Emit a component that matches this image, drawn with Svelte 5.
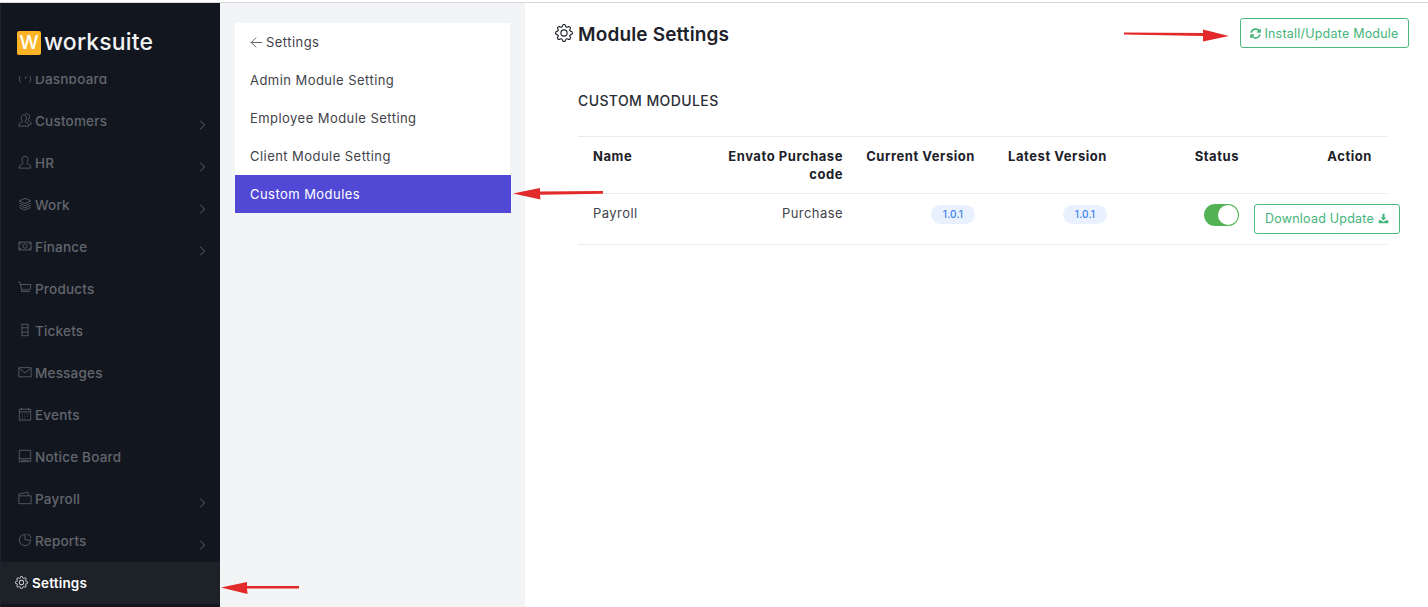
<script>
  const gear = 'M8 4.754a3.246 3.246 0 1 0 0 6.492 3.246 3.246 0 0 0 0-6.492zM5.754 8a2.246 2.246 0 1 1 4.492 0 2.246 2.246 0 0 1-4.492 0z M9.796 1.343c-.527-1.79-3.065-1.79-3.592 0l-.094.319a.873.873 0 0 1-1.255.52l-.292-.16c-1.64-.892-3.433.902-2.54 2.541l.159.292a.873.873 0 0 1-.52 1.255l-.319.094c-1.79.527-1.79 3.065 0 3.592l.319.094a.873.873 0 0 1 .52 1.255l-.16.292c-.892 1.64.901 3.434 2.541 2.54l.292-.159a.873.873 0 0 1 1.255.52l.094.319c.527 1.79 3.065 1.79 3.592 0l.094-.319a.873.873 0 0 1 1.255-.52l.292.16c1.64.893 3.434-.902 2.54-2.541l-.159-.292a.873.873 0 0 1 .52-1.255l.319-.094c1.79-.527 1.79-3.065 0-3.592l-.319-.094a.873.873 0 0 1-.52-1.255l.16-.292c.893-1.64-.902-3.433-2.541-2.54l-.292.159a.873.873 0 0 1-1.255-.52l-.094-.319zm-2.633.283c.246-.835 1.428-.835 1.674 0l.094.319a1.873 1.873 0 0 0 2.693 1.115l.291-.16c.764-.415 1.6.42 1.184 1.185l-.159.292a1.873 1.873 0 0 0 1.116 2.692l.318.094c.835.246.835 1.428 0 1.674l-.319.094a1.873 1.873 0 0 0-1.115 2.693l.16.291c.415.764-.42 1.6-1.185 1.184l-.291-.159a1.873 1.873 0 0 0-2.693 1.116l-.094.318c-.246.835-1.428.835-1.674 0l-.094-.319a1.873 1.873 0 0 0-2.692-1.115l-.292.16c-.764.415-1.6-.42-1.184-1.185l.159-.291A1.873 1.873 0 0 0 1.945 8.93l-.319-.094c-.835-.246-.835-1.428 0-1.674l.319-.094A1.873 1.873 0 0 0 3.06 4.377l-.16-.292c-.415-.764.42-1.6 1.185-1.184l.292.159a1.873 1.873 0 0 0 2.692-1.115l.094-.319z';

  // outline icons, drawn on a 16 box
  const icons = {
    dash: 'M3 13.5a6.5 6.5 0 1 1 10 0M8 9l2-3',
    customers: 'M1 15v-1.5c0-1.5 1.5-2.3 3-2.8.8-.3 1-.8.8-1.5C4 8 3.6 7 3.6 5.6 3.6 3.4 5 2.2 6.6 2.2S9.6 3.4 9.6 5.6c0 1.4-.4 2.4-1.2 3.6-.2.7 0 1.2.8 1.5 1.5.5 3 1.3 3 2.8V15ZM8 1.5c.5-.5 1.3-.8 2-.8 1.7 0 3 1.2 3 3.4 0 1.4-.4 2.4-1.2 3.6-.2.7 0 1.2.8 1.5 1 .4 2.4 1 2.4 2.6V13h-2',
    hr: 'M1.5 15v-1.5c0-1.6 1.7-2.5 3.3-3 .9-.3 1.1-.9.9-1.6C4.9 7.7 4.5 6.6 4.5 5.2 4.5 2.8 6 1.5 8 1.5s3.5 1.3 3.5 3.7c0 1.4-.4 2.5-1.2 3.7-.2.7 0 1.3.9 1.6 1.6.5 3.3 1.4 3.3 3V15Z',
    work: 'M8 1.5 14.5 4.5 8 7.5 1.5 4.5ZM1.5 7 8 10l6.5-3M1.5 9.5 8 12.5l6.5-3M1.5 12 8 15l6.5-3',
    finance: 'M1 3.5h14v9H1Z M1 6a2.5 2.5 0 0 0 2.5-2.5M12.5 3.5A2.5 2.5 0 0 0 15 6M1 10a2.5 2.5 0 0 1 2.5 2.5M12.5 12.5A2.5 2.5 0 0 1 15 10M8 5.5a2.5 2.5 0 1 0 0 5 2.5 2.5 0 0 0 0-5Z',
    products: 'M.5 1H2l.8 3M2.8 4H15l-1.5 6H4.3Zm1.5 6-.5 2h9.7M5.5 14.5h.01M12 14.5h.01',
    tickets: 'M4.5 1v14l1.2-1 1.1 1 1.2-1 1.2 1 1.1-1 1.2 1V1l-1.2 1-1.1-1-1.2 1-1.2-1-1.1 1ZM4.5 5.5h7M4.5 10.5h7',
    messages: 'M1 3h14v10.5H1ZM1 3.5l7 5.5 7-5.5',
    events: 'M1.5 2.5h13V15h-13ZM4 1v2.500M12 1v2.500M1.500 5.500h13M4.500 8h1M7.500 8h1M10.500 8h1M4.500 10.500h1M7.500 10.500h1M10.500 10.500h1M4.500 13h1M7.500 13h1',
    notice: 'M1.5 1.5h13v13h-13ZM1.5 11h13M4 13h8',
    payroll: 'M1 5.5h14v9H1ZM1 5.5v-2l10-2 1.500 4M3 9.500h.01',
    reports: 'M8 1.5A6.500 6.500 0 1 0 14.500 8H8ZM10 1a6 6 0 0 1 5 5'
  };

  const menu = [
    { name: 'Dashboard', icon: 'dash' },
    { name: 'Customers', icon: 'customers', more: true },
    { name: 'HR', icon: 'hr', more: true },
    { name: 'Work', icon: 'work', more: true },
    { name: 'Finance', icon: 'finance', more: true },
    { name: 'Products', icon: 'products' },
    { name: 'Tickets', icon: 'tickets' },
    { name: 'Messages', icon: 'messages' },
    { name: 'Events', icon: 'events' },
    { name: 'Notice Board', icon: 'notice' },
    { name: 'Payroll', icon: 'payroll', more: true },
    { name: 'Reports', icon: 'reports', more: true }
  ];

  const settingsLinks = ['Admin Module Setting', 'Employee Module Setting', 'Client Module Setting'];
  const columns = ['Name', 'Envato Purchase code', 'Current Version', 'Latest Version', 'Status', 'Action'];
</script>

<div class="page">
  <div class="topline"></div>
  <div class="layout">
    <aside class="sidebar">
      <div class="brand">
        <span class="brand-mark">W</span>
        <span class="brand-name">worksuite</span>
      </div>
      <nav class="nav">
        <ul>
          {#each menu as item}
            <li>
              <svg class="nav-icon" viewBox="0 0 16 16" fill="none" stroke="currentColor" stroke-width="0.9"><path d={icons[item.icon]} /></svg>
              <span>{item.name}</span>
              {#if item.more}
                <svg class="chevron" viewBox="0 0 8 12" fill="none" stroke="currentColor" stroke-width="1"><path d="M2 1.5 6.5 6 2 10.5" /></svg>
              {/if}
            </li>
          {/each}
        </ul>
      </nav>
      <div class="nav-settings">
        <svg class="nav-gear" viewBox="0 0 16 16" fill="currentColor"><path d={gear} /></svg>
        <span>Settings</span>
      </div>
    </aside>

    <section class="submenu">
      <div class="submenu-card">
        <div class="submenu-row">
          <svg class="back" viewBox="0 0 16 16" fill="none" stroke="currentColor" stroke-width="1"><path d="M15 8H1.5M7.5 2l-6 6 6 6" /></svg>
          Settings
        </div>
        {#each settingsLinks as link}
          <div class="submenu-row">{link}</div>
        {/each}
        <div class="submenu-row active">Custom Modules</div>
      </div>
    </section>

    <main class="content">
      <header class="content-head">
        <h1>
          <svg class="title-gear" viewBox="0 0 16 16" fill="currentColor"><path d={gear} /></svg>
          Module Settings
        </h1>
        <button class="btn-outline install">
          <svg class="refresh" viewBox="0 0 512 512" fill="currentColor"><path d="M370.7 133.3C339.5 104 298.9 88 255.8 88c-77.5.1-144.3 53.2-162.8 126.9-1.3 5.4-6.1 9.1-11.6 9.1H24.1c-7.5 0-13.2-6.8-11.8-14.2C33.9 94.9 134.8 8 256 8c66.4 0 126.8 26.1 171.3 68.7L463 41c15.1-15.1 41-4.4 41 17v134c0 13.3-10.7 24-24 24H346c-21.4 0-32.1-25.9-17-41l41.7-41.7zM32 296h134c21.4 0 32.1 25.9 17 41l-41.700 41.700c31.200 29.300 71.800 45.300 114.900 45.300 77.400-.1 144.300-53.100 162.800-126.800 1.300-5.400 6.100-9.100 11.600-9.100h57.300c7.500 0 13.200 6.800 11.800 14.200C478.100 417.100 377.200 504 256 504c-66.400 0-126.800-26.100-171.300-68.700L49 471c-15.100 15.100-41 4.400-41-17V320c0-13.300 10.700-24 24-24z" /></svg>
          Install/Update Module
        </button>
      </header>

      <h2>CUSTOM MODULES</h2>

      <table>
        <colgroup>
          <col class="c1" /><col class="c2" /><col class="c3" /><col class="c3" /><col class="c3" /><col class="c4" />
        </colgroup>
        <thead>
          <tr>
            {#each columns as col}
              <th>{col}</th>
            {/each}
          </tr>
        </thead>
        <tbody>
          <tr>
            <td>Payroll</td>
            <td class="right">Purchase</td>
            <td class="right"><span class="badge">1.0.1</span></td>
            <td class="right"><span class="badge">1.0.1</span></td>
            <td class="right"><span class="toggle"><span class="knob"></span></span></td>
            <td class="action">
              <button class="btn-outline download">
                Download Update
                <svg class="dl-icon" viewBox="0 0 16 16" fill="currentColor"><path d="M6.5 1h3v5.500h2.800L8 11 3.700 6.500h2.800Z M1 10.500h3.500L8 13l3.500-2.500H15V15H1Z" /></svg>
              </button>
            </td>
          </tr>
        </tbody>
      </table>
    </main>
  </div>

  <!-- annotation arrows drawn on top of the screenshot -->
  <svg class="arrows" viewBox="0 0 1428 607">
    <path d="M247 586h52v2.500h-52l.5 5.500L221 587.500 247 582Z" />
    <path d="M540 191.500l63-.5v2.800l-63 1 .5 4.700L513 193.500 540 188Z" />
    <path d="M1124 32.500l79 .5v-3.500L1229 36l-26 5.500V36l-79-1.500Z" />
  </svg>
</div>

<style>
  :global(body) {
    margin: 0;
    background: #fff;
  }

  .page {
    position: relative;
    height: 607px;
    overflow: hidden;
    font-family: Inter, "Liberation Sans", sans-serif;
    font-size: 13px;
    letter-spacing: 0.45px;
    color: #3f434a;
  }

  .topline {
    height: 2px;
    border-bottom: 1px solid #d6d8db;
  }

  .layout {
    display: flex;
    height: 604px;
  }

  .sidebar {
    width: 219px;
    flex: none;
    display: flex;
    flex-direction: column;
    background: #12161f;
    border-left: 1px solid #1e242d;
    color: #63666d;
  }

  .brand {
    height: 73px;
    flex: none;
    box-sizing: border-box;
    padding: 28px 0 0 16px;
    display: flex;
    align-items: flex-start;
    gap: 3px;
  }

  .brand-mark {
    width: 24px;
    height: 24px;
    border-radius: 2px;
    background: #fcb426;
    color: #fff;
    font-size: 19px;
    line-height: 24px;
    font-weight: 500;
    letter-spacing: 0;
    text-align: center;
  }

  .brand-name {
    color: #f2f3f4;
    font-size: 23px;
    line-height: 22px;
    font-weight: 500;
    letter-spacing: 0.15px;
  }

  .nav {
    flex: 1;
    overflow: hidden;
    min-height: 0;
  }

  .nav ul {
    list-style: none;
    margin: -18px 0 0;
    padding: 0;
  }

  .nav li {
    height: 42px;
    display: flex;
    align-items: center;
    padding-left: 17px;
    font-weight: 500;
    font-size: 13.5px;
    letter-spacing: 0.2px;
  }

  .nav-icon {
    width: 14px;
    height: 14px;
    margin: -3px 3px 0 0;
    flex: none;
  }

  .chevron {
    width: 8px;
    height: 12px;
    margin: 8px 14px 0 auto;
    flex: none;
  }

  .nav-settings {
    height: 42px;
    flex: none;
    margin-bottom: 3px;
    display: flex;
    align-items: center;
    padding-left: 14px;
    background: #1d2229;
    color: #fff;
    font-size: 13.5px;
    font-weight: 600;
    letter-spacing: 0.2px;
  }

  .nav-gear {
    width: 13px;
    height: 13px;
    margin: -2px 4px 0 0;
    color: #d8d9db;
  }

  .submenu {
    width: 305px;
    flex: none;
    box-sizing: border-box;
    padding: 20px 14px 0 15px;
    background: #f3f4f6;
  }

  .submenu-card {
    background: #fff;
    width: 275px;
  }

  .submenu-row {
    height: 38px;
    display: flex;
    align-items: center;
    padding-left: 15px;
  }

  .submenu-row.active {
    width: 261px;
    background: #5149d6;
    color: #fff;
  }

  .back {
    width: 13px;
    height: 13px;
    margin-right: 3px;
    flex: none;
  }

  .content {
    flex: 1;
    min-width: 0;
  }

  .content-head {
    display: flex;
    justify-content: space-between;
    align-items: flex-start;
    padding: 15px 19px 0 30px;
  }

  h1 {
    display: flex;
    align-items: center;
    gap: 5px;
    margin: 0;
    height: 32px;
    color: #1d2129;
    font-size: 19px;
    font-weight: 600;
    letter-spacing: 0.15px;
  }

  .title-gear {
    width: 18px;
    height: 18px;
    margin-top: -2px;
  }

  .btn-outline {
    display: inline-flex;
    align-items: center;
    box-sizing: border-box;
    background: #fff;
    border: 1px solid #4cb87e;
    border-radius: 3px;
    color: #45b47a;
    font-family: inherit;
    font-size: 12.5px;
    letter-spacing: 0.22px;
    white-space: nowrap;
    padding: 0;
  }

  .install {
    width: 169px;
    height: 30px;
    justify-content: center;
    gap: 3px;
  }

  .refresh {
    width: 11px;
    height: 11px;
  }

  h2 {
    margin: 42px 0 0 53px;
    height: 18px;
    color: #2a2e35;
    font-size: 14px;
    line-height: 18px;
    font-weight: 500;
    letter-spacing: 0.4px;
  }

  table {
    table-layout: fixed;
    width: 809px;
    margin: 26px 0 0 53px;
    border-collapse: collapse;
  }

  .c1 { width: 132px; }
  .c2 { width: 148px; }
  .c3 { width: 132px; }
  .c4 { width: 133px; }

  th {
    box-sizing: border-box;
    height: 57px;
    padding: 10px 15px 0 0;
    vertical-align: top;
    text-align: right;
    line-height: 18px;
    color: #1d2129;
    font-size: 13px;
    font-weight: 700;
    letter-spacing: 0.55px;
    border-top: 1px solid #e8eaec;
    border-bottom: 1px solid #e8eaec;
  }

  th:first-child {
    padding-left: 15px;
    text-align: left;
  }

  th:nth-child(2) {
    padding-left: 15px;
  }

  td {
    height: 51px;
    box-sizing: border-box;
    padding: 10px 15px 0;
    vertical-align: top;
    line-height: 18px;
    border-bottom: 1px solid #e8eaec;
  }

  .right {
    text-align: right;
  }

  .badge {
    display: inline-block;
    width: 44px;
    height: 19px;
    border-radius: 10px;
    background: #e8f1fd;
    color: #3f83ee;
    font-size: 10px;
    font-weight: 500;
    line-height: 19px;
    text-align: center;
    letter-spacing: 0.2px;
    vertical-align: top;
    margin-top: 1px;
  }

  .toggle {
    display: inline-block;
    box-sizing: border-box;
    width: 35px;
    height: 22px;
    border-radius: 11px;
    background: #53b354;
    position: relative;
    vertical-align: top;
  }

  .knob {
    position: absolute;
    top: 1px;
    right: 1px;
    width: 20px;
    height: 20px;
    border-radius: 50%;
    background: #fff;
  }

  .action {
    padding: 10px 0 0;
  }

  .download {
    width: 146px;
    height: 30px;
    padding-bottom: 2px;
    justify-content: center;
    gap: 4px;
  }

  .dl-icon {
    width: 11px;
    height: 11px;
  }

  .arrows {
    position: absolute;
    inset: 0;
    width: 1428px;
    height: 607px;
    fill: #e22a2a;
    pointer-events: none;
  }
</style>
